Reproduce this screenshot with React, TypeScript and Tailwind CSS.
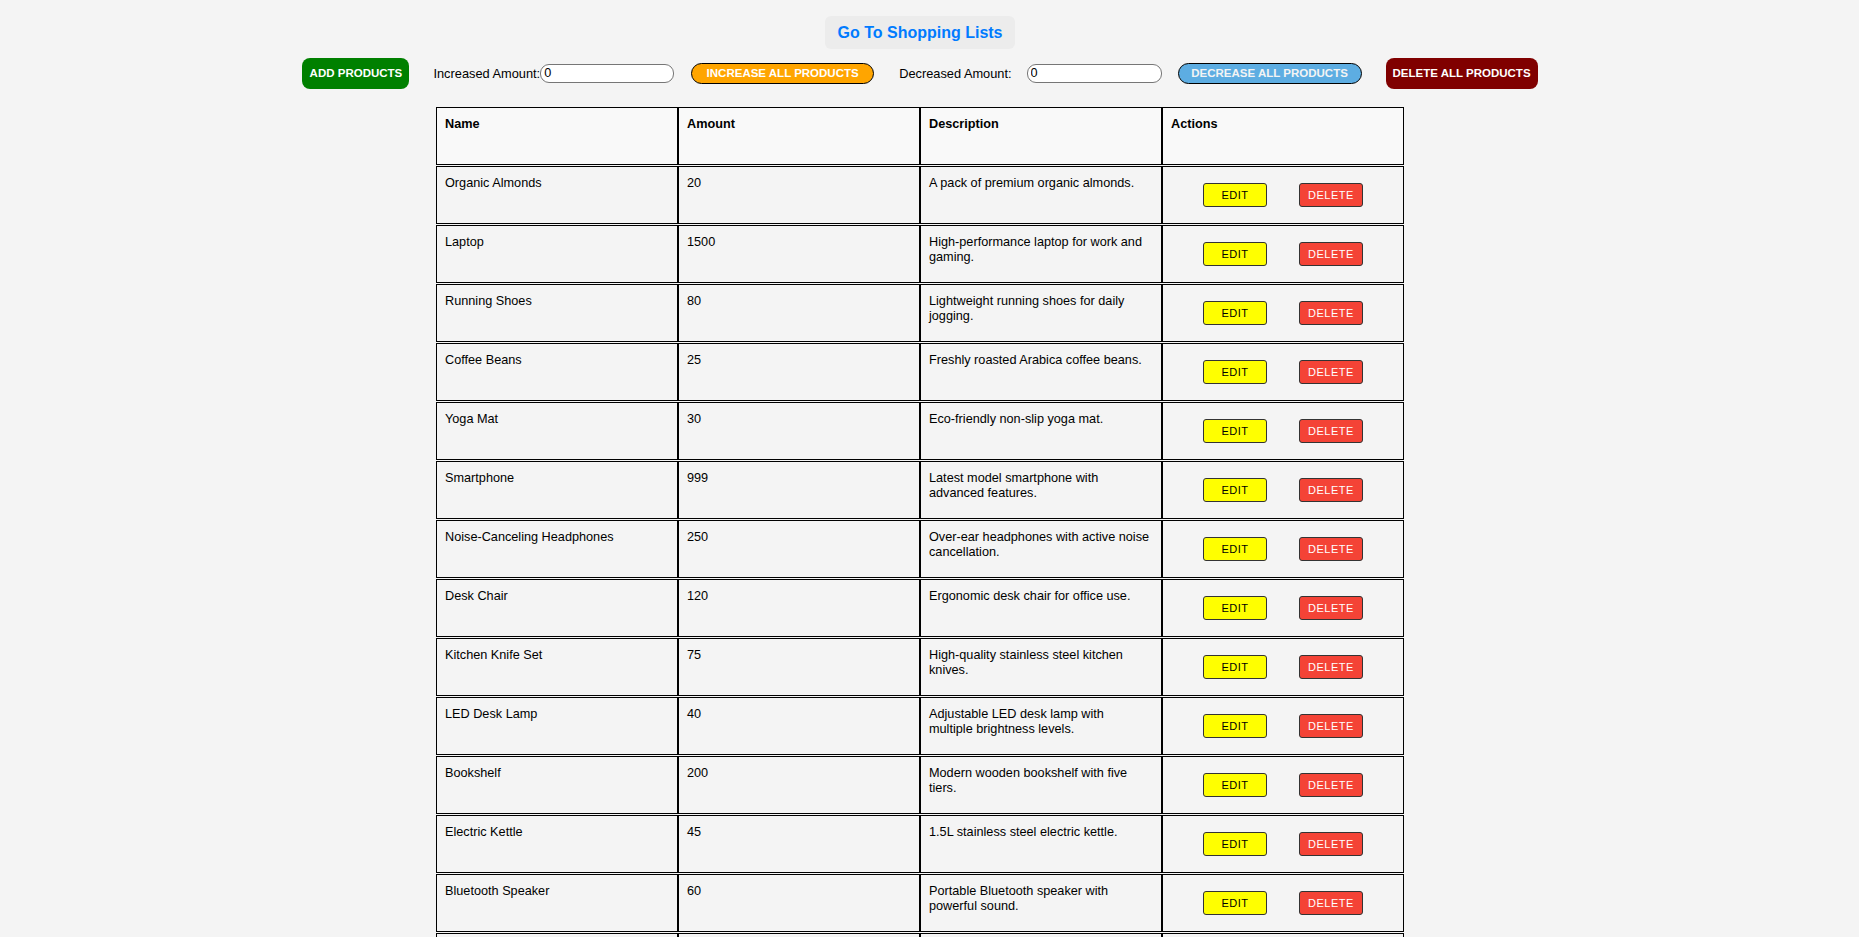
const products = [
  { name: "Organic Almonds", amount: 20, description: "A pack of premium organic almonds." },
  { name: "Laptop", amount: 1500, description: "High-performance laptop for work and gaming." },
  { name: "Running Shoes", amount: 80, description: "Lightweight running shoes for daily jogging." },
  { name: "Coffee Beans", amount: 25, description: "Freshly roasted Arabica coffee beans." },
  { name: "Yoga Mat", amount: 30, description: "Eco-friendly non-slip yoga mat." },
  { name: "Smartphone", amount: 999, description: "Latest model smartphone with advanced features." },
  { name: "Noise-Canceling Headphones", amount: 250, description: "Over-ear headphones with active noise cancellation." },
  { name: "Desk Chair", amount: 120, description: "Ergonomic desk chair for office use." },
  { name: "Kitchen Knife Set", amount: 75, description: "High-quality stainless steel kitchen knives." },
  { name: "LED Desk Lamp", amount: 40, description: "Adjustable LED desk lamp with multiple brightness levels." },
  { name: "Bookshelf", amount: 200, description: "Modern wooden bookshelf with five tiers." },
  { name: "Electric Kettle", amount: 45, description: "1.5L stainless steel electric kettle." },
  { name: "Bluetooth Speaker", amount: 60, description: "Portable Bluetooth speaker with powerful sound." },
  { name: "Travel Backpack", amount: 55, description: "Durable water-resistant backpack for travel." },
  { name: "Wireless Mouse", amount: 35, description: "Ergonomic wireless mouse with long battery life." },
];

const cell = "border border-black pl-2 pr-[11px] pt-[9px] pb-2 align-top";

export default function App() {
  return (
    <div className="min-h-screen bg-[#f4f4f4] font-['Liberation_Sans',Arial,sans-serif] text-black">
      <div className="w-[1840px] pt-4 pb-10">
        <div className="flex justify-center">
          <button
            type="button"
            className="flex h-[33px] items-center rounded-md bg-[#ececec] px-3 text-[16px] font-bold text-[#007bff]"
          >
            Go To Shopping Lists
          </button>
        </div>

        <div className="mt-[9px] flex items-center justify-center text-[12.8px]">
          <button
            type="button"
            className="h-[31px] w-[107px] rounded-lg bg-[#008000] text-[11.5px] font-bold text-white"
          >
            ADD PRODUCTS
          </button>

          <label className="ml-6 flex items-center">
            Increased Amount:
            <input
              defaultValue="0"
              className="h-[19px] w-[134px] rounded-[9px] border border-[#767676] bg-white px-[3px] text-[12.7px] outline-none"
            />
          </label>

          <button
            type="button"
            className="ml-[17px] h-[21px] w-[183px] rounded-[11px] border border-black bg-[#ffa500] text-[11.5px] font-bold text-white"
          >
            INCREASE ALL PRODUCTS
          </button>

          <label className="ml-[25px] flex items-center">
            Decreased Amount:
            <input
              defaultValue="0"
              className="ml-[15px] h-[19px] w-[135px] rounded-[9px] border border-[#767676] bg-white px-[3px] text-[12.7px] outline-none"
            />
          </label>

          <button
            type="button"
            className="ml-4 h-[21px] w-[184px] rounded-[11px] border border-black bg-[#5dade2] text-[11.5px] font-bold text-[#f4f4f4]"
          >
            DECREASE ALL PRODUCTS
          </button>

          <button
            type="button"
            className="ml-6 h-[31px] w-[152px] rounded-lg bg-[#800000] text-[11.5px] font-bold text-white"
          >
            DELETE ALL PRODUCTS
          </button>
        </div>

        <table className="mx-auto mt-[17px] w-[968px] table-fixed border-separate border-spacing-x-0 border-spacing-y-px text-[12.7px] leading-[15px]">
          <thead>
            <tr className="h-[58px] bg-[#f9f9f9]">
              <th className={cell + " text-left font-bold"}>Name</th>
              <th className={cell + " text-left font-bold"}>Amount</th>
              <th className={cell + " text-left font-bold"}>Description</th>
              <th className={cell + " text-left font-bold"}>Actions</th>
            </tr>
          </thead>
          <tbody>
            {products.map((p) => (
              <tr key={p.name} className="h-[58px] bg-[#f4f4f4]">
                <td className={cell}>{p.name}</td>
                <td className={cell}>{p.amount}</td>
                <td className={cell}>{p.description}</td>
                <td className="border border-black px-2 align-middle">
                  <div className="flex justify-center gap-8">
                    <button
                      type="button"
                      className="h-[24px] w-[64px] rounded-[3px] border border-[#333] bg-[#ffff00] text-[11px] tracking-[0.5px] text-black"
                    >
                      EDIT
                    </button>
                    <button
                      type="button"
                      className="h-[24px] w-[64px] rounded-[3px] border border-[#333] bg-[#f44336] text-[11px] font-medium tracking-[0.5px] text-white"
                    >
                      DELETE
                    </button>
                  </div>
                </td>
              </tr>
            ))}
          </tbody>
        </table>
      </div>
    </div>
  );
}
